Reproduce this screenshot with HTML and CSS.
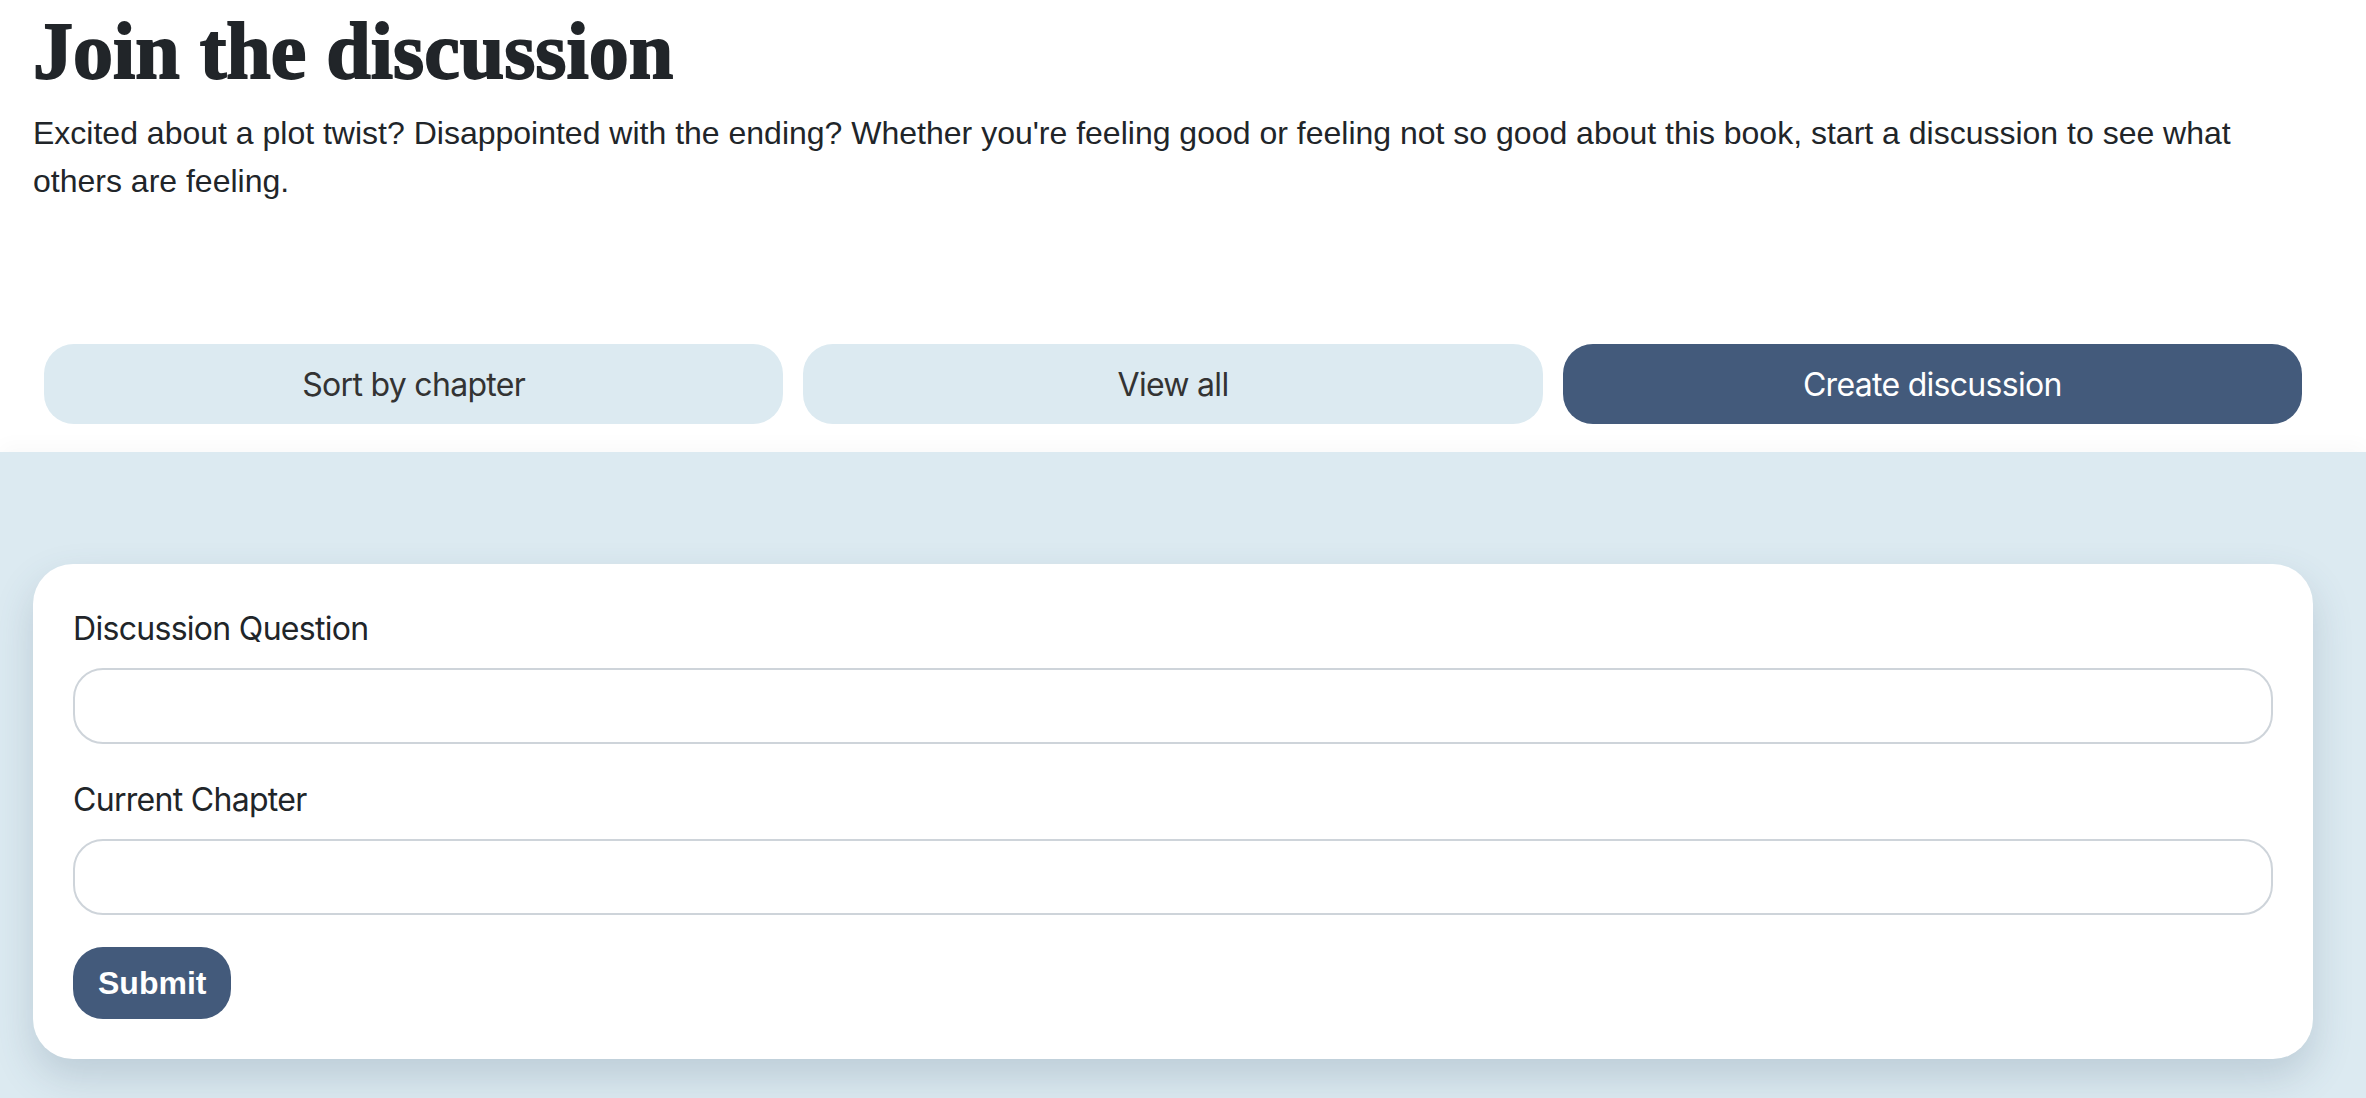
FILE: index.html
```html
<!DOCTYPE html>
<html lang="en">
<head>
<meta charset="utf-8">
<title>Join the discussion</title>
<link rel="stylesheet" href="styles.css">
</head>
<body>
  <header class="intro">
    <h1 class="intro-title">Join the discussion</h1>
    <p class="intro-text">Excited about a plot twist? Disappointed with the ending? Whether you're feeling good or feeling not so good about this book, start a discussion to see what others are feeling.</p>
    <nav class="actions">
      <button class="action action-light" type="button">Sort by chapter</button>
      <button class="action action-light" type="button">View all</button>
      <button class="action action-dark" type="button">Create discussion</button>
    </nav>
  </header>
  <main class="board">
    <form class="card">
      <label class="field-label" for="question">Discussion Question</label>
      <input class="field-input" id="question" type="text">
      <label class="field-label" for="chapter">Current Chapter</label>
      <input class="field-input" id="chapter" type="text">
      <button class="submit" type="button">Submit</button>
    </form>
  </main>
</body>
</html>
```

FILE: styles.css
```css
html, body {
  margin: 0;
  padding: 0;
  background: #ffffff;
}

body {
  color: #212529;
  font-family: "Liberation Sans", Arial, sans-serif;
  overflow: hidden;
}

.intro {
  width: 2280px;
  margin-left: 33px;
  padding-top: 3px;
}

.intro-title {
  margin: 0;
  font-family: "Liberation Serif", "Times New Roman", serif;
  font-weight: 700;
  font-size: 80px;
  line-height: 96px;
  color: #212529;
  -webkit-text-stroke: 1.8px #212529;
}

.intro-text {
  margin: 10px 0 0;
  font-family: "Liberation Sans", Arial, sans-serif;
  font-size: 32px;
  line-height: 48px;
  color: #212529;
}

.actions {
  display: flex;
  gap: 20px;
  margin-top: 139px;
  padding: 0 11px;
}

.action {
  flex: 1 1 0;
  height: 80px;
  border: none;
  border-radius: 30px;
  font-family: Inter, "Noto Sans", sans-serif;
  font-size: 32px;
  letter-spacing: -0.7px;
  cursor: pointer;
}

.action-light {
  background: #dceaf1;
  color: #333333;
}

.action-dark {
  background: #435a7b;
  color: #ffffff;
}

.board {
  margin-top: 28px;
  background: #dceaf1;
  padding: 112px 0 60px;
  box-shadow: 0 -8px 18px rgba(0, 0, 0, 0.025);
}

.card {
  display: block;
  width: 2280px;
  box-sizing: border-box;
  margin-left: 33px;
  padding: 41px 40px 40px;
  background: #ffffff;
  border-radius: 40px;
  box-shadow: 0 18px 40px rgba(60, 85, 110, 0.2);
}

.field-label {
  display: block;
  font-family: Inter, "Noto Sans", sans-serif;
  font-size: 32px;
  line-height: 48px;
  letter-spacing: -0.7px;
  color: #212529;
  margin-bottom: 15px;
}

.field-input {
  display: block;
  width: 100%;
  height: 76px;
  box-sizing: border-box;
  border: 2px solid #ced4da;
  border-radius: 30px;
  background: #ffffff;
  margin: 0 0 32px;
  padding: 0 24px;
  font-size: 32px;
  outline: none;
}

.submit {
  display: block;
  height: 72px;
  padding: 0 25px;
  border: none;
  border-radius: 30px;
  background: #435a7b;
  color: #ffffff;
  font-family: "Liberation Sans", Arial, sans-serif;
  font-weight: 700;
  font-size: 32px;
  cursor: pointer;
}
```
